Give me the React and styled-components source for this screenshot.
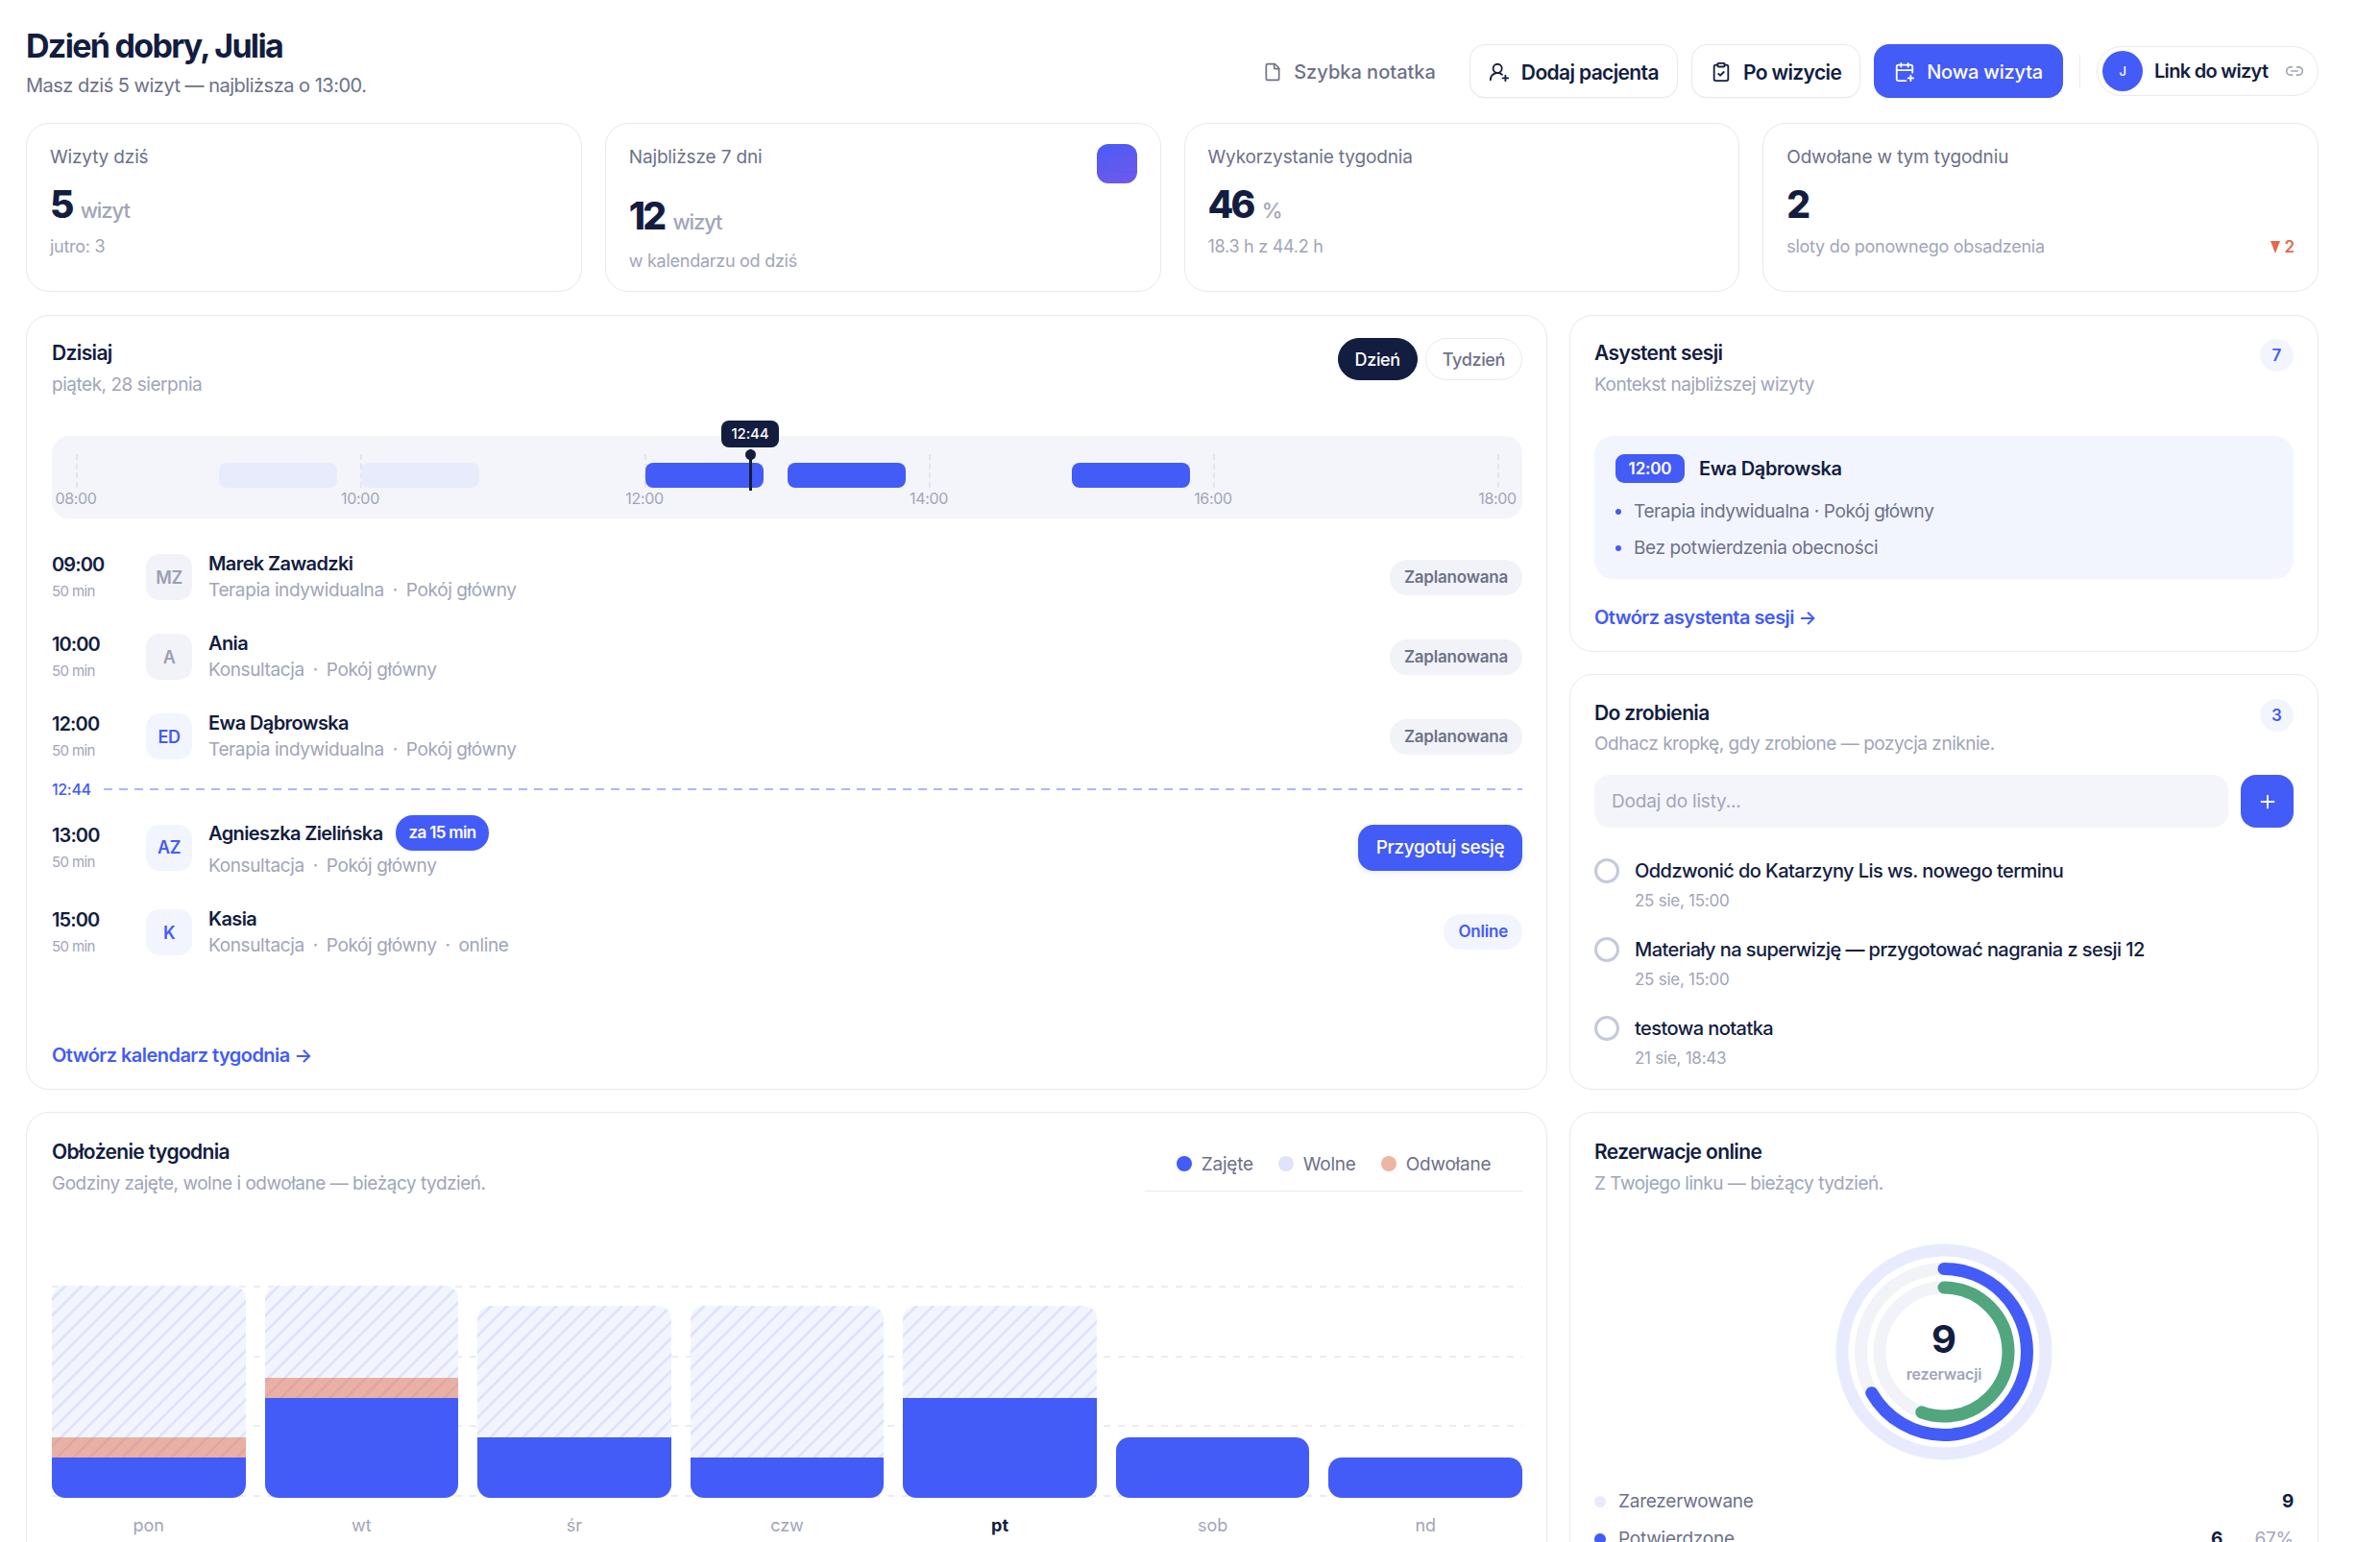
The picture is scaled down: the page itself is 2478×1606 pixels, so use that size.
import React from 'react';
import styled, { createGlobalStyle } from 'styled-components';
import { File, UserRoundPlus, ClipboardCheck, CalendarPlus, Link2, Plus } from 'lucide-react';

const navy = '#131d3f';
const blue = '#435bf7';
const gray = '#6d7189';
const muted = '#a1a5b9';
const line = '#e8e9f1';

const GlobalStyle = createGlobalStyle`
  html, body { margin:0; padding:0; background:#fff; overflow:hidden; }
  body { font-family:Inter, "Noto Sans", sans-serif; color:${navy}; }
  * { box-sizing:border-box; }
`;

const Page = styled.div`
  width:2478px;
  height:1606px;
  overflow:hidden;
  padding:24px 64px 0 27px;
`;

const Header = styled.header`
  display:flex;
  justify-content:space-between;
  height:80px;
  margin-bottom:24px;
`;
const Greeting = styled.h1`
  margin:0;
  font-size:34px;
  line-height:48px;
  font-weight:700;
  letter-spacing:-0.05em;
`;
const GreetingSub = styled.p`
  margin:0;
  font-size:20px;
  line-height:34px;
  color:${gray};
  letter-spacing:-0.025em;
`;
const Actions = styled.div`
  display:flex;
  align-items:center;
  gap:14px;
  padding-top:20px;
`;
const GhostButton = styled.button`
  display:flex;
  align-items:center;
  gap:12px;
  height:56px;
  padding:2px 21px 0 12px;
  border:0;
  background:none;
  font:500 20px Inter, sans-serif;
  letter-spacing:0;
  color:${gray};
`;
const OutlineButton = styled.button`
  display:flex;
  align-items:center;
  gap:12px;
  height:56px;
  padding:2px 19px 0;
  border:1px solid ${line};
  border-radius:16px;
  background:#fff;
  font:600 21px Inter, sans-serif;
  letter-spacing:-0.03em;
  color:${navy};
  box-shadow:0 1px 2px rgba(19,29,63,.04);
`;
const PrimaryButton = styled(OutlineButton)`
  padding:2px 21px 0;
  border:0;
  background:${blue};
  color:#fff;
  font-weight:500;
  font-size:20px;
  letter-spacing:-0.01em;
`;
const Divider = styled.span`
  width:1px;
  height:34px;
  margin:0 3px;
  background:${line};
`;
const LinkPill = styled.div`
  display:flex;
  align-items:center;
  gap:12px;
  width:231px;
  height:52px;
  padding:0 14px 0 5px;
  border:1px solid ${line};
  border-radius:26px;
  font-size:20px;
  font-weight:600;
  letter-spacing:-0.035em;
  span:nth-child(2) { flex:1; white-space:nowrap; }
`;
const LinkAvatar = styled.span`
  display:flex;
  align-items:center;
  justify-content:center;
  width:42px;
  height:42px;
  border-radius:50%;
  background:${blue};
  color:#fff;
  font-size:13px;
  font-weight:500;
`;

const StatGrid = styled.section`
  display:grid;
  grid-template-columns:repeat(4, 1fr);
  gap:24px;
  margin-bottom:24px;
`;
const Card = styled.div`
  border:1px solid ${line};
  border-radius:24px;
  background:#fff;
`;
const StatCard = styled(Card)`
  height:176px;
  padding:21px 24px 0;
`;
const StatHead = styled.div`
  display:flex;
  justify-content:space-between;
  align-items:flex-start;
  font-size:19px;
  line-height:28px;
  color:${gray};
  letter-spacing:-0.008em;
`;
const GradientTile = styled.div`
  width:42px;
  height:41px;
  border-radius:12px;
  background:linear-gradient(160deg, #4a5bf7, #7259ea);
  overflow:hidden;
`;
const StatValue = styled.div`
  display:flex;
  align-items:baseline;
  gap:9px;
  margin-top:${p => p.$tall ? '10px' : '11px'};
  font-size:39px;
  line-height:48px;
  font-weight:800;
  letter-spacing:-0.07em;
`;
const StatUnit = styled.span`
  font-size:22px;
  line-height:1;
  font-weight:500;
  color:${muted};
  letter-spacing:-0.05em;
`;
const StatFoot = styled.div`
  display:flex;
  justify-content:space-between;
  align-items:center;
  margin-top:${p => p.$tall ? '11px' : '8px'};
  font-size:18px;
  line-height:24px;
  color:${muted};
  letter-spacing:-0.015em;
`;
const Trend = styled.span`
  display:flex;
  align-items:center;
  gap:4px;
  color:#e2694a;
  font-weight:600;
  letter-spacing:0;
  font-size:17px;
  &::before {
    content:'';
    border-top:13px solid #e2694a;
    border-left:5px solid transparent;
    border-right:5px solid transparent;
  }
`;

const MainGrid = styled.section`
  display:grid;
  grid-template-columns:1fr 780px;
  gap:23px;
  height:807px;
  margin-bottom:23px;
`;
const TodayCard = styled(Card)`
  display:flex;
  flex-direction:column;
  padding:25px 25px 21px 26px;
`;
const CardHead = styled.div`
  display:flex;
  justify-content:space-between;
  align-items:flex-start;
`;
const CardTitle = styled.h2`
  margin:0;
  font-size:21px;
  line-height:28px;
  font-weight:600;
  letter-spacing:-0.03em;
`;
const CardSub = styled.p`
  margin:5px 0 0;
  font-size:19px;
  line-height:28px;
  color:${muted};
  letter-spacing:-0.025em;
`;
const Tabs = styled.div`
  display:flex;
  gap:8px;
  margin-top:-2px;
`;
const Tab = styled.button`
  height:44px;
  padding:0 17px;
  border:1px solid ${p => p.$active ? navy : line};
  border-radius:22px;
  background:${p => p.$active ? navy : '#fff'};
  color:${p => p.$active ? '#fff' : gray};
  font:500 18px Inter, sans-serif;
  letter-spacing:-0.02em;
`;

const Timeline = styled.div`
  position:relative;
  height:86px;
  margin-top:39px;
  border-radius:18px;
  background:#f4f5fa;
`;
const Tick = styled.i`
  position:absolute;
  top:19px;
  left:${p => p.$x}px;
  height:35px;
  border-left:2px dashed #e3e5ee;
`;
const TickLabel = styled.span`
  position:absolute;
  top:54px;
  left:${p => p.$x}px;
  width:60px;
  margin-left:-30px;
  text-align:center;
  font-size:16px;
  line-height:22px;
  color:${muted};
  letter-spacing:-0.02em;
`;
const SlotBar = styled.div`
  position:absolute;
  top:28px;
  left:${p => p.$x}px;
  width:123px;
  height:26px;
  border-radius:8px;
  background:${p => p.$past ? '#e8ebfc' : blue};
`;
const NowNeedle = styled.div`
  position:absolute;
  top:14px;
  left:726px;
  width:3px;
  height:43px;
  background:${navy};
  &::before {
    content:'';
    position:absolute;
    top:0;
    left:-4px;
    width:11px;
    height:11px;
    border-radius:50%;
    background:${navy};
  }
`;
const NowTip = styled.div`
  position:absolute;
  top:-16px;
  left:697px;
  width:60px;
  height:28px;
  border-radius:8px;
  background:${navy};
  color:#fff;
  text-align:center;
  font-size:15px;
  line-height:28px;
  font-weight:500;
  letter-spacing:-0.01em;
`;

const VisitList = styled.div`
  display:flex;
  flex-direction:column;
  gap:27px;
  margin-top:33px;
`;
const VisitRow = styled.div`
  display:flex;
  align-items:center;
`;
const TimeCol = styled.div`
  flex:none;
  width:98px;
  height:56px;
  padding-top:1px;
`;
const TimeText = styled.div`
  font-size:20px;
  line-height:28px;
  font-weight:600;
  letter-spacing:-0.045em;
`;
const Duration = styled.div`
  font-size:15px;
  line-height:28px;
  color:${muted};
  letter-spacing:-0.04em;
`;
const Avatar = styled.div`
  flex:none;
  display:flex;
  align-items:center;
  justify-content:center;
  width:48px;
  height:48px;
  margin-right:17px;
  border-radius:14px;
  background:${p => p.$next ? '#f3f5fe' : '#f2f3f8'};
  color:${p => p.$next ? blue : '#9a9eb3'};
  font-size:18px;
  font-weight:600;
  letter-spacing:-0.03em;
`;
const VisitInfo = styled.div`
  flex:1;
`;
const NameLine = styled.div`
  display:flex;
  align-items:center;
  gap:13px;
  font-size:20px;
  line-height:28px;
  font-weight:600;
  letter-spacing:-0.03em;
`;
const SoonPill = styled.span`
  height:37px;
  padding:0 14px;
  border-radius:18px;
  background:${blue};
  color:#fff;
  font-size:17px;
  line-height:37px;
  font-weight:600;
  letter-spacing:-0.04em;
`;
const VisitMeta = styled.div`
  display:flex;
  gap:9px;
  font-size:19px;
  line-height:28px;
  color:${muted};
  letter-spacing:-0.02em;
  margin-top:${p => p.$soon ? '2px' : '0'};
`;
const Status = styled.span`
  height:37px;
  margin-top:${p => p.$online ? '-2px' : '0'};
  padding:0 15px;
  border-radius:18px;
  background:${p => p.$online ? '#f3f5fe' : '#f2f3f8'};
  color:${p => p.$online ? blue : gray};
  font-size:17px;
  line-height:37px;
  font-weight:600;
  letter-spacing:-0.012em;
`;
const PrepareButton = styled.button`
  width:171px;
  height:48px;
  border:0;
  border-radius:16px;
  background:${blue};
  color:#fff;
  font:500 19px Inter, sans-serif;
  letter-spacing:-0.02em;
  box-shadow:0 2px 6px rgba(67,91,247,.12);
`;
const NowLine = styled.div`
  display:flex;
  align-items:center;
  gap:13px;
  height:0;
  font-size:16px;
  font-weight:500;
  color:${blue};
  letter-spacing:-0.02em;
  &::after {
    content:'';
    flex:1;
    height:2px;
    background:repeating-linear-gradient(90deg, #aab7fb 0 9px, transparent 9px 16px);
  }
`;
const MoreLink = styled.a`
  display:block;
  margin-top:${p => p.$push ? 'auto' : '26px'};
  font-size:20px;
  line-height:28px;
  font-weight:600;
  color:${blue};
  letter-spacing:-0.027em;
`;

const SideCol = styled.div`
  display:flex;
  flex-direction:column;
  gap:23px;
`;
const AssistantCard = styled(Card)`
  padding:25px 25px 21px;
`;
const CountBadge = styled.span`
  width:35px;
  height:34px;
  margin-top:-1px;
  border-radius:50%;
  background:#f3f5fe;
  color:${blue};
  text-align:center;
  font-size:17px;
  line-height:34px;
  font-weight:600;
`;
const SessionBox = styled.div`
  margin-top:39px;
  padding:19px 22px 18px;
  border-radius:20px;
  background:#f3f5fe;
`;
const SessionHead = styled.div`
  display:flex;
  align-items:center;
  gap:15px;
  font-size:20px;
  font-weight:600;
  letter-spacing:-0.02em;
`;
const SessionTime = styled.span`
  width:72px;
  height:30px;
  border-radius:9px;
  background:${blue};
  color:#fff;
  text-align:center;
  font-size:17px;
  line-height:30px;
  letter-spacing:-0.01em;
`;
const SessionPoints = styled.ul`
  display:flex;
  flex-direction:column;
  gap:10px;
  margin:16px 0 0;
  padding:0;
  list-style:none;
`;
const SessionPoint = styled.li`
  display:flex;
  align-items:center;
  gap:13px;
  font-size:19px;
  line-height:28px;
  color:${gray};
  letter-spacing:-0.02em;
  &::before {
    content:'';
    width:6px;
    height:6px;
    border-radius:50%;
    background:${blue};
  }
`;
const TodoCard = styled(Card)`
  flex:1;
  padding:26px 25px 0;
`;
const TodoSub = styled(CardSub)`
  margin-top:4px;
`;
const TodoForm = styled.div`
  display:flex;
  gap:13px;
  margin-top:18px;
`;
const TodoInput = styled.div`
  flex:1;
  height:55px;
  padding:0 18px;
  border-radius:16px;
  background:#f4f5fa;
  font-size:19px;
  line-height:55px;
  color:${muted};
  letter-spacing:-0.01em;
`;
const AddButton = styled.button`
  display:flex;
  align-items:center;
  justify-content:center;
  width:55px;
  height:55px;
  border:0;
  border-radius:16px;
  background:${blue};
  color:#fff;
`;
const TodoList = styled.div`
  display:flex;
  flex-direction:column;
  gap:25px;
  margin-top:31px;
`;
const TodoItem = styled.div`
  display:flex;
  gap:16px;
`;
const TodoDot = styled.span`
  flex:none;
  width:26px;
  height:26px;
  margin-top:1px;
  border:3px solid #c5c9dc;
  border-radius:50%;
`;
const TodoText = styled.div`
  font-size:20px;
  line-height:28px;
  font-weight:500;
  letter-spacing:-0.028em;
`;
const TodoDate = styled.div`
  margin-top:5px;
  font-size:17px;
  line-height:24px;
  color:${muted};
  letter-spacing:-0.015em;
`;

const BottomGrid = styled.section`
  display:grid;
  grid-template-columns:1fr 780px;
  gap:23px;
`;
const BottomCard = styled(Card)`
  padding:27px 25px 30px;
`;
const ChartCard = styled(BottomCard)`
  padding-left:26px;
`;
const Legend = styled.div`
  display:flex;
  justify-content:center;
  gap:26px;
  width:393px;
  height:55px;
  padding-top:14px;
  border-bottom:1px solid ${line};
`;
const LegendItem = styled.span`
  display:flex;
  align-items:center;
  gap:10px;
  height:24px;
  font-size:19px;
  color:${gray};
  letter-spacing:-0.012em;
`;
const Swatch = styled.i`
  width:${p => p.$size || 16}px;
  height:${p => p.$size || 16}px;
  border-radius:50%;
  background:${p => p.$color};
`;
const Plot = styled.div`
  position:relative;
  display:grid;
  grid-template-columns:repeat(7, 1fr);
  align-items:end;
  gap:20px;
  height:221px;
  margin-top:92px;
`;
const GridLines = styled.div`
  position:absolute;
  inset:0 0 0 0;
  display:flex;
  flex-direction:column;
  justify-content:space-between;
  padding:0 0 1px;
`;
const GridLine = styled.i`
  height:2px;
  background:repeating-linear-gradient(90deg, #ebecf3 0 7px, transparent 7px 15px);
`;
const DayBar = styled.div`
  position:relative;
  display:flex;
  flex-direction:column;
  justify-content:flex-end;
  height:${p => p.$h}px;
  border-radius:14px;
  overflow:hidden;
  background:${p => p.$free
    ? 'repeating-linear-gradient(135deg, #f3f5fe 0 9px, #dfe3fb 9px 12px)'
    : 'transparent'};
`;
const CancelSeg = styled.div`
  height:${p => p.$h}px;
  background:rgba(224,118,90,.55);
`;
const BusySeg = styled.div`
  flex:none;
  height:${p => p.$h}px;
  background:${blue};
`;
const Days = styled.div`
  display:grid;
  grid-template-columns:repeat(7, 1fr);
  gap:20px;
  margin-top:16px;
`;
const Day = styled.span`
  text-align:center;
  font-size:18px;
  line-height:26px;
  font-weight:${p => p.$today ? 700 : 400};
  color:${p => p.$today ? navy : muted};
`;
const DonutWrap = styled.div`
  position:relative;
  width:240px;
  height:240px;
  margin:41px auto 0;
`;
const DonutCenter = styled.div`
  position:absolute;
  inset:0;
  display:flex;
  flex-direction:column;
  align-items:center;
  justify-content:center;
`;
const DonutNum = styled.div`
  font-size:40px;
  line-height:48px;
  font-weight:700;
  margin-top:-3px;
`;
const DonutLabel = styled.div`
  font-size:16px;
  line-height:24px;
  font-weight:600;
  color:${muted};
  letter-spacing:-0.01em;
`;
const BookingRows = styled.div`
  display:flex;
  flex-direction:column;
  gap:11px;
  margin-top:22px;
`;
const BookingRow = styled.div`
  display:flex;
  align-items:center;
  gap:13px;
  font-size:19px;
  line-height:28px;
  color:${gray};
  letter-spacing:-0.012em;
`;
const BookingName = styled.span`
  flex:1;
`;
const BookingCount = styled.b`
  color:${navy};
  font-weight:700;
`;
const BookingPct = styled.span`
  width:61px;
  text-align:right;
  color:${muted};
`;

const hourX = h => 26 + (h - 8) * 148;

const visits = [
  { time: '09:00', ini: 'MZ', name: 'Marek Zawadzki', meta: ['Terapia indywidualna', 'Pokój główny'] },
  { time: '10:00', ini: 'A', name: 'Ania', meta: ['Konsultacja', 'Pokój główny'] },
  { time: '12:00', ini: 'ED', next: true, name: 'Ewa Dąbrowska', meta: ['Terapia indywidualna', 'Pokój główny'] },
];

const todos = [
  { text: 'Oddzwonić do Katarzyny Lis ws. nowego terminu', date: '25 sie, 15:00' },
  { text: 'Materiały na superwizję — przygotować nagrania z sesji 12', date: '25 sie, 15:00' },
  { text: 'testowa notatka', date: '21 sie, 18:43' },
];

const week = [
  { day: 'pon', total: 221, busy: 42, cancel: 21 },
  { day: 'wt', total: 221, busy: 104, cancel: 21 },
  { day: 'śr', total: 200, busy: 63 },
  { day: 'czw', total: 200, busy: 42 },
  { day: 'pt', total: 200, busy: 104, today: true },
  { day: 'sob', total: 63, busy: 63, solid: true },
  { day: 'nd', total: 42, busy: 42, solid: true },
];

const Meta = ({ parts, soon }) => (
  <VisitMeta $soon={soon}>
    {parts.map((p, i) => (
      <React.Fragment key={p}>
        {i > 0 && <span>·</span>}
        <span>{p}</span>
      </React.Fragment>
    ))}
  </VisitMeta>
);

const Ring = ({ r, color, part }) => {
  const c = 2 * Math.PI * r;
  return (
    <circle
      cx="120"
      cy="120"
      r={r}
      fill="none"
      stroke={color}
      strokeWidth="13"
      strokeLinecap="round"
      strokeDasharray={part ? `${c * part} ${c}` : undefined}
      transform="rotate(-90 120 120)"
    />
  );
};

const App = () => {
  return (
    <Page>
      <GlobalStyle />
      <Header>
        <div>
          <Greeting>Dzień dobry, Julia</Greeting>
          <GreetingSub>Masz dziś 5 wizyt — najbliższa o 13:00.</GreetingSub>
        </div>
        <Actions>
          <GhostButton><File size={20} />Szybka notatka</GhostButton>
          <OutlineButton><UserRoundPlus size={22} />Dodaj pacjenta</OutlineButton>
          <OutlineButton><ClipboardCheck size={22} />Po wizycie</OutlineButton>
          <PrimaryButton><CalendarPlus size={22} />Nowa wizyta</PrimaryButton>
          <Divider />
          <LinkPill>
            <LinkAvatar>J</LinkAvatar>
            <span>Link do wizyt</span>
            <Link2 size={20} color={muted} />
          </LinkPill>
        </Actions>
      </Header>

      <StatGrid>
        <StatCard>
          <StatHead>Wizyty dziś</StatHead>
          <StatValue>5 <StatUnit>wizyt</StatUnit></StatValue>
          <StatFoot>jutro: 3</StatFoot>
        </StatCard>
        <StatCard>
          <StatHead>
            Najbliższe 7 dni
            <GradientTile>
              <svg width="42" height="41" viewBox="0 0 42 41">
                <path d="M6 20c6 6 12 8 18 9 6 1 12 0 18 0" fill="none" stroke="#4e5cf5" strokeWidth="1" />
              </svg>
            </GradientTile>
          </StatHead>
          <StatValue $tall>12 <StatUnit>wizyt</StatUnit></StatValue>
          <StatFoot $tall>w kalendarzu od dziś</StatFoot>
        </StatCard>
        <StatCard>
          <StatHead>Wykorzystanie tygodnia</StatHead>
          <StatValue>46 <StatUnit>%</StatUnit></StatValue>
          <StatFoot>18.3 h z 44.2 h</StatFoot>
        </StatCard>
        <StatCard>
          <StatHead>Odwołane w tym tygodniu</StatHead>
          <StatValue>2</StatValue>
          <StatFoot>
            <span>sloty do ponownego obsadzenia</span>
            <Trend>2</Trend>
          </StatFoot>
        </StatCard>
      </StatGrid>

      <MainGrid>
        <TodayCard>
          <CardHead>
            <div>
              <CardTitle>Dzisiaj</CardTitle>
              <CardSub>piątek, 28 sierpnia</CardSub>
            </div>
            <Tabs>
              <Tab $active>Dzień</Tab>
              <Tab>Tydzień</Tab>
            </Tabs>
          </CardHead>

          <Timeline>
            {[8, 10, 12, 14, 16, 18].map(h => (
              <React.Fragment key={h}>
                <Tick $x={hourX(h) - 1} />
                <TickLabel $x={hourX(h) - 1}>{String(h).padStart(2, '0')}:00</TickLabel>
              </React.Fragment>
            ))}
            <SlotBar $x={hourX(9)} $past />
            <SlotBar $x={hourX(10)} $past />
            <SlotBar $x={hourX(12)} />
            <SlotBar $x={hourX(13)} />
            <SlotBar $x={hourX(15)} />
            <NowNeedle />
            <NowTip>12:44</NowTip>
          </Timeline>

          <VisitList>
            {visits.map(v => (
              <VisitRow key={v.time}>
                <TimeCol>
                  <TimeText>{v.time}</TimeText>
                  <Duration>50 min</Duration>
                </TimeCol>
                <Avatar $next={v.next}>{v.ini}</Avatar>
                <VisitInfo>
                  <NameLine>{v.name}</NameLine>
                  <Meta parts={v.meta} />
                </VisitInfo>
                <Status>Zaplanowana</Status>
              </VisitRow>
            ))}
            <NowLine>12:44</NowLine>
            <VisitRow>
              <TimeCol>
                <TimeText>13:00</TimeText>
                <Duration>50 min</Duration>
              </TimeCol>
              <Avatar $next>AZ</Avatar>
              <VisitInfo>
                <NameLine>Agnieszka Zielińska <SoonPill>za 15 min</SoonPill></NameLine>
                <Meta parts={['Konsultacja', 'Pokój główny']} soon />
              </VisitInfo>
              <PrepareButton>Przygotuj sesję</PrepareButton>
            </VisitRow>
            <VisitRow>
              <TimeCol>
                <TimeText>15:00</TimeText>
                <Duration>50 min</Duration>
              </TimeCol>
              <Avatar $next>K</Avatar>
              <VisitInfo>
                <NameLine>Kasia</NameLine>
                <Meta parts={['Konsultacja', 'Pokój główny', 'online']} />
              </VisitInfo>
              <Status $online>Online</Status>
            </VisitRow>
          </VisitList>

          <MoreLink $push>Otwórz kalendarz tygodnia →</MoreLink>
        </TodayCard>

        <SideCol>
          <AssistantCard>
            <CardHead>
              <div>
                <CardTitle>Asystent sesji</CardTitle>
                <CardSub>Kontekst najbliższej wizyty</CardSub>
              </div>
              <CountBadge>7</CountBadge>
            </CardHead>
            <SessionBox>
              <SessionHead>
                <SessionTime>12:00</SessionTime>
                Ewa Dąbrowska
              </SessionHead>
              <SessionPoints>
                <SessionPoint>Terapia indywidualna · Pokój główny</SessionPoint>
                <SessionPoint>Bez potwierdzenia obecności</SessionPoint>
              </SessionPoints>
            </SessionBox>
            <MoreLink>Otwórz asystenta sesji →</MoreLink>
          </AssistantCard>

          <TodoCard>
            <CardHead>
              <div>
                <CardTitle>Do zrobienia</CardTitle>
                <TodoSub>Odhacz kropkę, gdy zrobione — pozycja zniknie.</TodoSub>
              </div>
              <CountBadge>3</CountBadge>
            </CardHead>
            <TodoForm>
              <TodoInput>Dodaj do listy...</TodoInput>
              <AddButton><Plus size={22} /></AddButton>
            </TodoForm>
            <TodoList>
              {todos.map(t => (
                <TodoItem key={t.text}>
                  <TodoDot />
                  <div>
                    <TodoText>{t.text}</TodoText>
                    <TodoDate>{t.date}</TodoDate>
                  </div>
                </TodoItem>
              ))}
            </TodoList>
          </TodoCard>
        </SideCol>
      </MainGrid>

      <BottomGrid>
        <ChartCard>
          <CardHead>
            <div>
              <CardTitle>Obłożenie tygodnia</CardTitle>
              <CardSub>Godziny zajęte, wolne i odwołane — bieżący tydzień.</CardSub>
            </div>
            <Legend>
              <LegendItem><Swatch $color={blue} />Zajęte</LegendItem>
              <LegendItem><Swatch $color="#dfe3fb" />Wolne</LegendItem>
              <LegendItem><Swatch $color="#eeb5a3" />Odwołane</LegendItem>
            </Legend>
          </CardHead>
          <Plot>
            <GridLines>
              <GridLine />
              <GridLine />
              <GridLine />
              <GridLine />
            </GridLines>
            {week.map(d => (
              <DayBar key={d.day} $h={d.total} $free={!d.solid}>
                {d.cancel && <CancelSeg $h={d.cancel} />}
                <BusySeg $h={d.busy} />
              </DayBar>
            ))}
          </Plot>
          <Days>
            {week.map(d => <Day key={d.day} $today={d.today}>{d.day}</Day>)}
          </Days>
        </ChartCard>

        <BottomCard>
          <CardTitle>Rezerwacje online</CardTitle>
          <CardSub>Z Twojego linku — bieżący tydzień.</CardSub>
          <DonutWrap>
            <svg width="240" height="240" viewBox="0 0 240 240">
              <Ring r={106} color="#e8ebfd" />
              <Ring r={86.5} color="#f2f3f8" />
              <Ring r={67} color="#f2f3f8" />
              <Ring r={86.5} color={blue} part={6 / 9} />
              <Ring r={67} color="#52a67d" part={5 / 9} />
            </svg>
            <DonutCenter>
              <DonutNum>9</DonutNum>
              <DonutLabel>rezerwacji</DonutLabel>
            </DonutCenter>
          </DonutWrap>
          <BookingRows>
            <BookingRow>
              <Swatch $size={12} $color="#e8ebfd" />
              <BookingName>Zarezerwowane</BookingName>
              <BookingCount>9</BookingCount>
            </BookingRow>
            <BookingRow>
              <Swatch $size={12} $color={blue} />
              <BookingName>Potwierdzone</BookingName>
              <BookingCount>6</BookingCount>
              <BookingPct>67%</BookingPct>
            </BookingRow>
          </BookingRows>
        </BottomCard>
      </BottomGrid>
    </Page>
  );
};

export default App;
